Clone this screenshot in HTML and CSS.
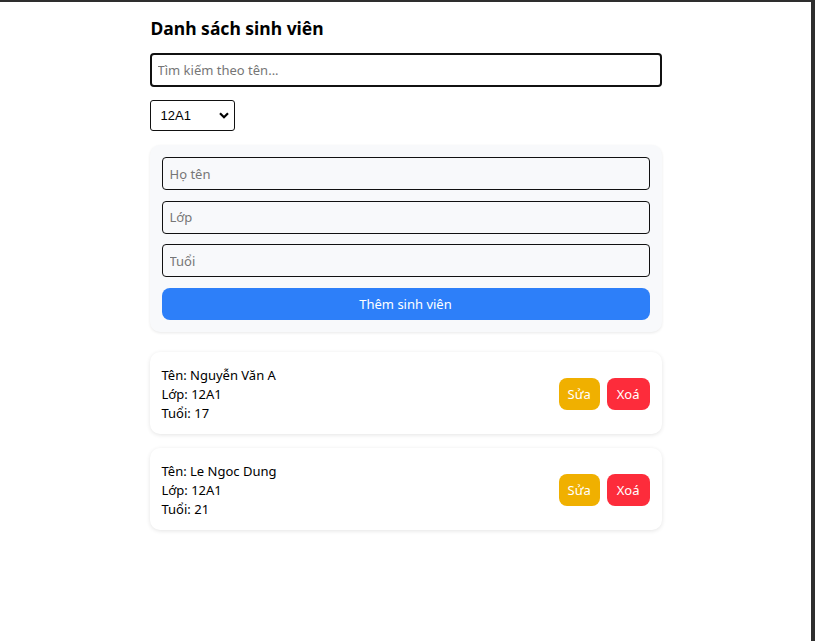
FILE: index.html
```html
<!DOCTYPE html>
<html lang="vi">
<head>
<meta charset="utf-8">
<title>Danh sách sinh viên</title>
<link rel="stylesheet" href="styles.css">
</head>
<body>
<div class="page">
  <div class="container">
    <h2 class="title">Danh sách sinh viên</h2>
    <input class="search" type="text" placeholder="Tìm kiếm theo tên...">
    <div class="select-wrap">
      <select class="class-select">
        <option>12A1</option>
      </select>
      <svg class="chev" width="10" height="7" viewBox="0 0 10 7"><path d="M1 1.2 L5 5.2 L9 1.2" fill="none" stroke="#000" stroke-width="2.2"/></svg>
    </div>
    <div class="form-card">
      <input class="field" type="text" placeholder="Họ tên">
      <input class="field" type="text" placeholder="Lớp">
      <input class="field" type="text" placeholder="Tuổi">
      <button class="add-btn">Thêm sinh viên</button>
    </div>
    <div class="list">
      <div class="student">
        <div class="info">
          <div>Tên: Nguyễn Văn A</div>
          <div>Lớp: 12A1</div>
          <div>Tuổi: 17</div>
        </div>
        <div class="actions">
          <button class="btn edit">Sửa</button>
          <button class="btn del">Xoá</button>
        </div>
      </div>
      <div class="student">
        <div class="info">
          <div>Tên: Le Ngoc Dung</div>
          <div>Lớp: 12A1</div>
          <div>Tuổi: 21</div>
        </div>
        <div class="actions">
          <button class="btn edit">Sửa</button>
          <button class="btn del">Xoá</button>
        </div>
      </div>
    </div>
  </div>
</div>
</body>
</html>
```
FILE: styles.css
```css
html {
  background: #2e2e2e;
  height: 100%;
}
body {
  margin: 0;
  height: 100%;
  font-family: "Noto Sans", "Open Sans", sans-serif;
  color: #000;
}
.page {
  margin: 2px 4px 0 0;
  background: #fff;
  height: calc(100% - 2px);
  box-sizing: border-box;
}
.container {
  width: 512px;
  margin: 0 auto;
  padding-top: 14px;
  display: flex;
  flex-direction: column;
  align-items: stretch;
}
.title {
  margin: 0 0 0 1px;
  font-size: 17.5px;
  line-height: 24px;
  font-weight: 700;
}
.search {
  margin-top: 13px;
  height: 34px;
  box-sizing: border-box;
  border: 2px solid #111;
  border-radius: 4px;
  padding: 0 6px;
  font-family: inherit;
  font-size: 13px;
  outline: none;
}
.search::placeholder, .field::placeholder {
  color: #767676;
}
.select-wrap {
  margin-top: 13px;
  position: relative;
  width: 85px;
  height: 31px;
}
.class-select {
  appearance: none;
  -webkit-appearance: none;
  width: 85px;
  height: 31px;
  box-sizing: border-box;
  border: 1px solid #111;
  border-radius: 3px;
  background: #fff;
  padding: 0 0 0 10px;
  font-family: "Liberation Sans", sans-serif;
  font-size: 13px;
  color: #000;
}
.chev {
  position: absolute;
  right: 6px;
  top: 12px;
  pointer-events: none;
}
.form-card {
  margin-top: 14px;
  background: #f8f9fb;
  border-radius: 10px;
  box-shadow: 0 1px 3px rgba(0, 0, 0, 0.09);
  padding: 12px;
  display: flex;
  flex-direction: column;
  gap: 10.67px;
}
.field {
  height: 33px;
  box-sizing: border-box;
  border: 1px solid #111;
  border-radius: 4px;
  background: #f8f9fb;
  padding: 0 7px;
  font-family: inherit;
  font-size: 13px;
  outline: none;
}
.add-btn {
  height: 32px;
  border: none;
  border-radius: 8px;
  background: #2d7ff9;
  color: #fff;
  font-family: inherit;
  font-size: 13px;
}
.list {
  margin-top: 20px;
  display: flex;
  flex-direction: column;
  gap: 14px;
}
.student {
  background: #fff;
  border-radius: 10px;
  box-shadow: 0 1px 4px rgba(0, 0, 0, 0.11);
  padding: 14px 12px 11px;
  display: flex;
  align-items: center;
  justify-content: space-between;
}
.info {
  font-size: 13px;
  line-height: 19px;
}
.actions {
  display: flex;
  gap: 7px;
}
.btn {
  height: 32px;
  border: none;
  border-radius: 8px;
  padding: 0 9px;
  color: #fff;
  font-family: inherit;
  font-size: 13px;
}
.edit {
  background: #f0b000;
}
.del {
  background: #fd2c3b;
  padding: 0 10px;
}
```
